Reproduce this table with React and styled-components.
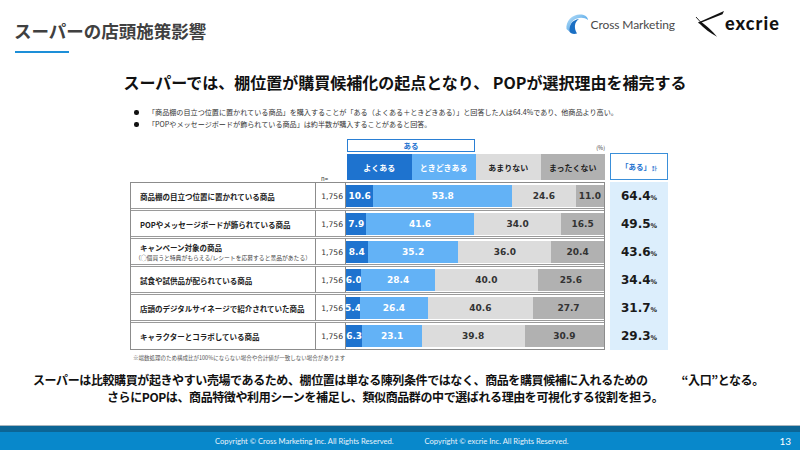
import React from 'react'
import styled, { createGlobalStyle } from 'styled-components'

const GlobalStyle = createGlobalStyle`
  html, body {
    margin: 0;
    padding: 0;
    width: 800px;
    height: 450px;
    overflow: hidden;
    background: #ffffff;
  }
  body {
    font-family: "Noto Sans CJK JP", "Noto Sans", sans-serif;
    color: #222;
  }
`

const rows = [
  { label: '商品棚の目立つ位置に置かれている商品', n: '1,756', v: [10.6, 53.8, 24.6, 11.0], total: '64.4' },
  { label: 'POPやメッセージボードが飾られている商品', n: '1,756', v: [7.9, 41.6, 34.0, 16.5], total: '49.5' },
  { label: 'キャンペーン対象の商品', sub: '（◯個買うと特典がもらえる/レシートを応募すると景品があたる）', n: '1,756', v: [8.4, 35.2, 36.0, 20.4], total: '43.6' },
  { label: '試食や試供品が配られている商品', n: '1,756', v: [6.0, 28.4, 40.0, 25.6], total: '34.4' },
  { label: '店頭のデジタルサイネージで紹介されていた商品', n: '1,756', v: [5.4, 26.4, 40.6, 27.7], total: '31.7' },
  { label: 'キャラクターとコラボしている商品', n: '1,756', v: [6.3, 23.1, 39.8, 30.9], total: '29.3' },
]

const segColors = ['#1e73cf', '#63b2f6', '#dcdcdc', '#b1b1b1']
const segText = ['#ffffff', '#ffffff', '#333333', '#333333']
const heads = ['よくある', 'ときどきある', 'あまりない', 'まったくない']

const CrossIcon = () => (
  <svg width="25" height="24" viewBox="0 0 25 24">
    <defs>
      <linearGradient id="cmg" x1="0" y1="0" x2="1" y2="1">
        <stop offset="0" stopColor="#bfe3fa" />
        <stop offset="1" stopColor="#2a8fe0" />
      </linearGradient>
    </defs>
    <path d="M2.5 17 C1.5 8.5 9 1.5 17.5 2.5 C21.5 3 24 5.5 24 8 C20.5 5 13.5 4.8 9.3 8.6 C6.2 11.5 5 15 5.4 19.5 Z" fill="url(#cmg)" />
    <path d="M5.4 19.5 C4.6 13 8.5 7.8 15 7 C10.5 10 9.6 15.5 13 21.5 C9.5 22.6 6.5 21.5 5.4 19.5 Z" fill="#1a6fc4" />
  </svg>
)

const ExcrieMark = () => (
  <svg width="30" height="28" viewBox="0 0 30 28">
    <path d="M29 1 L27.5 4.2 L4 13.6 L3.2 12.6 Z" fill="#111" />
    <path d="M3.2 12.2 L6 11.8 C11 15.5 17 20.5 22 26.8 C16 23.5 9 18.5 3.2 12.2 Z" fill="#111" />
    <path d="M1 7 L10.5 17.5" stroke="#111" strokeWidth="0.9" />
  </svg>
)

const App = () => (
  <>
    <GlobalStyle />
    <Page>
      <Header>
        <TitleBlock>
          <PageTitle>スーパーの店頭施策影響</PageTitle>
          <TitleLine />
        </TitleBlock>
        <Logos>
          <CrossLogo>
            <CrossIcon />
            <CrossText>Cross Marketing</CrossText>
          </CrossLogo>
          <ExcrieLogo>
            <ExcrieMark />
            <ExcrieText>excrie</ExcrieText>
          </ExcrieLogo>
        </Logos>
      </Header>

      <Heading>スーパーでは、棚位置が購買候補化の起点となり、 POPが選択理由を補完する</Heading>

      <Bullets>
        <Bullet>「商品棚の目立つ位置に置かれている商品」を購入することが「ある（よくある＋ときどきある）」と回答した人は64.4%であり、他商品より高い。</Bullet>
        <Bullet>「POPやメッセージボードが飾られている商品」は約半数が購入することがあると回答。</Bullet>
      </Bullets>

      <Chart>
        <AruCell>
          <AruBox>ある</AruBox>
          <Percent>(%)</Percent>
        </AruCell>
        <NLabel>n=</NLabel>
        <HeadBar>
          {heads.map((h, i) => (
            <HeadCell key={h} $bg={segColors[i]} $color={i < 2 ? '#fff' : '#222'}>{h}</HeadCell>
          ))}
        </HeadBar>
        <TotalHead>「ある」<small>計</small></TotalHead>

        <Table>
          {rows.map((r) => (
            <Row key={r.label}>
              <LabelCell>
                <span>{r.label}</span>
                {r.sub && <Sub>{r.sub}</Sub>}
              </LabelCell>
              <NCell>{r.n}</NCell>
              <BarCell>
                {r.v.map((v, i) => (
                  <Seg
                    key={i}
                    $bg={segColors[i]}
                    $color={segText[i]}
                    $last={i === 3}
                    style={{ flexBasis: `${v}%` }}
                  >
                    {v.toFixed(1)}
                  </Seg>
                ))}
              </BarCell>
            </Row>
          ))}
        </Table>
        <TotalBody>
          {rows.map((r) => (
            <TotalItem key={r.label}>
              {r.total}<small>%</small>
            </TotalItem>
          ))}
        </TotalBody>
      </Chart>

      <Footnote>※端数処理のため構成比が100%にならない場合や合計値が一致しない場合があります</Footnote>

      <Conclusion>
        <Line $indent={33}>
          スーパーは比較購買が起きやすい売場であるため、棚位置は単なる陳列条件ではなく、商品を購買候補に入れるための<Gap />“入口”となる。
        </Line>
        <Line $indent={107}>
          さらにPOPは、商品特徴や利用シーンを補足し、類似商品群の中で選ばれる理由を可視化する役割を担う。
        </Line>
      </Conclusion>

      <Footer>
        <FooterBand />
        <FooterBar>
          <Copy>Copyright © Cross Marketing Inc. All Rights Reserved.</Copy>
          <Copy>Copyright © excrie Inc. All Rights Reserved.</Copy>
          <PageNum>13</PageNum>
        </FooterBar>
      </Footer>
    </Page>
  </>
)

const Page = styled.div`
  width: 800px;
  height: 450px;
  display: flex;
  flex-direction: column;
  overflow: hidden;
`

const Header = styled.header`
  height: 62px;
  display: flex;
  justify-content: space-between;
  align-items: flex-start;
  padding: 0 20px 0 14px;
  flex-shrink: 0;
`

const TitleBlock = styled.div`
  padding-top: 19px;
`

const PageTitle = styled.h1`
  margin: 0;
  font-size: 17.5px;
  line-height: 24px;
  font-weight: 700;
  color: #404040;
`

const TitleLine = styled.div`
  width: 54px;
  height: 2px;
  margin: 8px 0 0 1px;
  background: #1d8fd8;
`

const Logos = styled.div`
  display: flex;
  align-items: center;
  gap: 20px;
  margin-top: 10px;
  height: 28px;
`

const CrossLogo = styled.div`
  display: flex;
  align-items: center;
  gap: 2px;
`

const CrossText = styled.span`
  font-family: Lato, "Open Sans", sans-serif;
  font-size: 12px;
  color: #4a4a4a;
  letter-spacing: -0.1px;
`

const ExcrieLogo = styled.div`
  display: flex;
  align-items: center;
`

const ExcrieText = styled.span`
  font-family: Lato, "Open Sans", sans-serif;
  font-weight: 900;
  font-size: 18px;
  letter-spacing: 1.1px;
  color: #111;
  margin-top: -2px;
`

const Heading = styled.h2`
  margin: 9px 0 0;
  padding-left: 10px;
  text-align: center;
  font-size: 16px;
  line-height: 22px;
  font-weight: 700;
  color: #111;
  white-space: nowrap;
`

const Bullets = styled.ul`
  list-style: none;
  margin: 13px 0 0 133px;
  padding: 0;
`

const Bullet = styled.li`
  position: relative;
  padding-left: 15px;
  font-size: 7.1px;
  line-height: 12px;
  color: #333;
  white-space: nowrap;

  &::before {
    content: '';
    position: absolute;
    left: 1px;
    top: 4px;
    width: 4.5px;
    height: 4.5px;
    border-radius: 50%;
    background: #111;
  }
`

const Chart = styled.div`
  margin: 9px 0 0 130px;
  width: 538px;
  display: grid;
  grid-template-columns: 216px 259px 5px 58px;
  grid-template-rows: 15px 28px 168px;
  flex-shrink: 0;
`

const AruCell = styled.div`
  grid-column: 2;
  grid-row: 1;
  display: flex;
  align-items: flex-start;
`

const AruBox = styled.div`
  width: 128px;
  height: 13px;
  box-sizing: border-box;
  border: 1px solid #2a7fd4;
  color: #1e73cf;
  font-size: 7.5px;
  font-weight: 700;
  line-height: 11px;
  text-align: center;
  margin-left: 1px;
`

const Percent = styled.span`
  margin-left: auto;
  margin-top: 5px;
  font-size: 5.5px;
  line-height: 8px;
  color: #333;
`

const NLabel = styled.div`
  grid-column: 1;
  grid-row: 2;
  justify-self: end;
  align-self: end;
  padding-right: 18px;
  font-size: 6px;
  line-height: 8px;
  color: #333;
  margin-bottom: -1px;
`

const HeadBar = styled.div`
  grid-column: 2;
  grid-row: 2;
  display: flex;
  height: 26px;
  padding-left: 1px;
`

const HeadCell = styled.div`
  flex: 1;
  display: flex;
  align-items: center;
  justify-content: center;
  background: ${(p) => p.$bg};
  color: ${(p) => p.$color};
  font-size: 8px;
  font-weight: 700;
`

const TotalHead = styled.div`
  grid-column: 4;
  grid-row: 2;
  height: 27px;
  margin-top: -1px;
  box-sizing: border-box;
  border: 1.5px solid #3a8fd9;
  display: flex;
  align-items: center;
  justify-content: center;
  color: #1e73cf;
  font-size: 7.5px;
  font-weight: 700;

  small {
    font-size: 5px;
    margin-left: 1px;
    margin-top: 2px;
  }
`

const Table = styled.div`
  grid-column: 1 / 3;
  grid-row: 3;
  box-sizing: border-box;
  border: 1px solid #8c8c8c;
  display: flex;
  flex-direction: column;
`

const Row = styled.div`
  flex: 1;
  display: grid;
  grid-template-columns: 185px 30px 1fr;
  border-top: 3px double #9a9a9a;
  margin-top: -1px;

  &:first-child {
    border-top: none;
    margin-top: 0;
  }
`

const LabelCell = styled.div`
  display: flex;
  flex-direction: column;
  justify-content: center;
  padding-left: 9px;
  border-right: 1px solid #8c8c8c;
  font-size: 7.5px;
  font-weight: 700;
  line-height: 11px;
  color: #222;
  white-space: nowrap;
`

const Sub = styled.span`
  font-size: 5.8px;
  font-weight: 400;
  line-height: 9px;
  color: #444;
  margin-left: -5px;
`

const NCell = styled.div`
  display: flex;
  align-items: center;
  justify-content: flex-end;
  padding-right: 2px;
  border-right: 1px solid #8c8c8c;
  font-family: "DejaVu Sans", sans-serif;
  font-size: 7.6px;
  color: #333;
`

const BarCell = styled.div`
  display: flex;
  padding: 2px 0;
`

const Seg = styled.div`
  flex-grow: ${(p) => (p.$last ? 1 : 0)};
  flex-shrink: 0;
  display: flex;
  align-items: center;
  justify-content: center;
  background: ${(p) => p.$bg};
  color: ${(p) => p.$color};
  font-family: "DejaVu Sans", sans-serif;
  font-size: 9px;
  font-weight: 700;
  white-space: nowrap;
  min-width: 0;
`

const TotalBody = styled.div`
  grid-column: 4;
  grid-row: 3;
  background: #dceefc;
  display: flex;
  flex-direction: column;
`

const TotalItem = styled.div`
  flex: 1;
  display: flex;
  align-items: center;
  justify-content: center;
  font-family: "DejaVu Sans", sans-serif;
  font-size: 12px;
  font-weight: 700;
  color: #1a1a1a;

  small {
    font-size: 6.5px;
    margin-top: 4px;
  }
`

const Footnote = styled.p`
  margin: 4px 0 0 133px;
  font-size: 5.5px;
  line-height: 8px;
  color: #555;
  white-space: nowrap;
`

const Conclusion = styled.div`
  margin-top: 9px;
  font-size: 12px;
  line-height: 17px;
  font-weight: 700;
  letter-spacing: -0.4px;
  color: #111;
`

const Line = styled.div`
  padding-left: ${(p) => p.$indent}px;
  white-space: nowrap;
`

const Gap = styled.span`
  display: inline-block;
  width: 34px;
`

const Footer = styled.footer`
  margin-top: auto;
  border-top: 1px solid #a9b6bf;
  flex-shrink: 0;
`

const FooterBand = styled.div`
  height: 6px;
  background: #0c6595;
`

const FooterBar = styled.div`
  height: 18px;
  background: #0888cb;
  display: flex;
  align-items: center;
  padding-left: 215px;
  gap: 31px;
`

const Copy = styled.span`
  font-family: Lato, "Open Sans", sans-serif;
  font-size: 7.6px;
  color: #e8f3fb;
`

const PageNum = styled.span`
  margin-left: auto;
  padding-right: 9px;
  font-family: Lato, "Open Sans", sans-serif;
  font-size: 10px;
  color: #ffffff;
`

export default App
